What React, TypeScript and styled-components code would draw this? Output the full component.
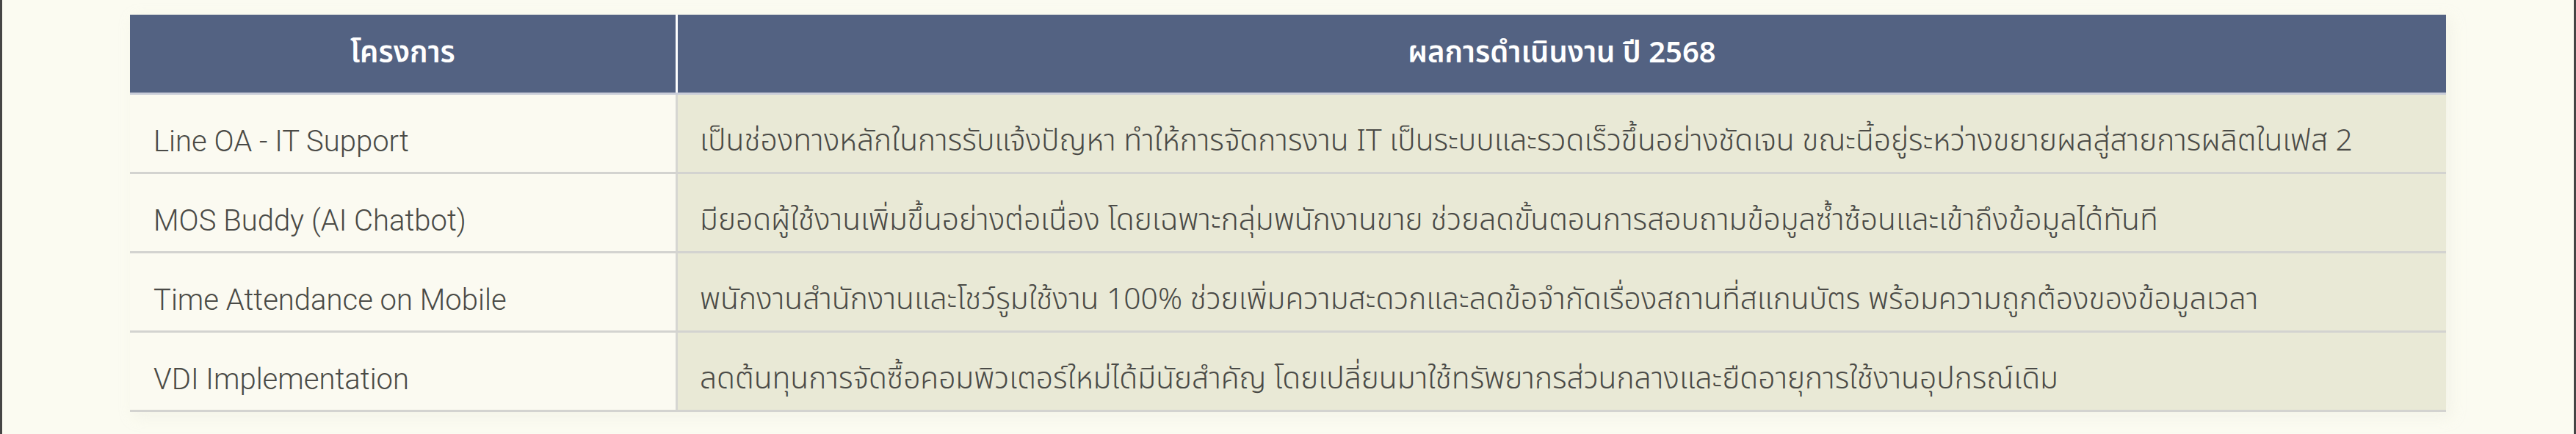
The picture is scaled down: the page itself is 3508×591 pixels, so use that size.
import React from "react";
import styled, { createGlobalStyle } from "styled-components";

const GlobalStyle = createGlobalStyle`
  html, body { margin: 0; padding: 0; background: #fbfbf1; }
  body { font-family: "Noto Sans Thai", "Noto Sans", "Liberation Sans", sans-serif; }
`;

const Page = styled.div`
  box-sizing: border-box;
  width: 3508px;
  height: 591px;
  background: #fbfbf1;
  border-left: 3px solid #454545;
  border-right: 3px solid #454545;
  padding: 20px 0 0 174px;
`;

const Table = styled.div`
  width: 3154px;
  display: grid;
  grid-template-columns: 743px 3px 1fr;
  box-shadow: 6px 6px 18px rgba(230, 230, 215, 0.35);
`;

const HeadCell = styled.div`
  height: 106px;
  background: #536282;
  border-bottom: 3px solid #c9cdd9;
  display: flex;
  align-items: center;
  justify-content: center;
  color: #ffffff;
  font-family: "Noto Sans Thai", "Noto Sans", "Liberation Sans", sans-serif;
  font-weight: 600;
  font-size: 40px;
`;

const HeadDivider = styled.div`
  background: #ffffff;
  border-bottom: 3px solid #c9cdd9;
`;

const Cell = styled.div<{ $tone: "light" | "dark" }>`
  box-sizing: content-box;
  height: 83px;
  padding-top: 22px;
  border-bottom: 3px solid #d3d3d0;
  background: ${(p) => (p.$tone === "light" ? "#fbfaf1" : "#e9e9d6")};
  display: flex;
  align-items: center;
  padding-left: ${(p) => (p.$tone === "light" ? "32px" : "30px")};
  color: #4a4a46;
  font-family: ${(p) =>
    p.$tone === "light"
      ? `"Roboto", "Liberation Sans", sans-serif`
      : `"Noto Sans Thai", "Noto Sans", "Liberation Sans", sans-serif`};
  font-weight: 300;
  font-size: ${(p) => (p.$tone === "light" ? "40px" : "40.8px")};
  white-space: nowrap;
`;

const BodyDivider = styled.div`
  background: #d6d6d2;
  border-bottom: 3px solid #d3d3d0;
`;

const rows: [string, string][] = [
  [
    "Line OA - IT Support",
    "เป็นช่องทางหลักในการรับแจ้งปัญหา ทำให้การจัดการงาน IT เป็นระบบและรวดเร็วขึ้นอย่างชัดเจน ขณะนี้อยู่ระหว่างขยายผลสู่สายการผลิตในเฟส 2",
  ],
  [
    "MOS Buddy (AI Chatbot)",
    "มียอดผู้ใช้งานเพิ่มขึ้นอย่างต่อเนื่อง โดยเฉพาะกลุ่มพนักงานขาย ช่วยลดขั้นตอนการสอบถามข้อมูลซ้ำซ้อนและเข้าถึงข้อมูลได้ทันที",
  ],
  [
    "Time Attendance on Mobile",
    "พนักงานสำนักงานและโชว์รูมใช้งาน 100% ช่วยเพิ่มความสะดวกและลดข้อจำกัดเรื่องสถานที่สแกนบัตร พร้อมความถูกต้องของข้อมูลเวลา",
  ],
  [
    "VDI Implementation",
    "ลดต้นทุนการจัดซื้อคอมพิวเตอร์ใหม่ได้มีนัยสำคัญ โดยเปลี่ยนมาใช้ทรัพยากรส่วนกลางและยืดอายุการใช้งานอุปกรณ์เดิม",
  ],
];

export default function App() {
  return (
    <>
      <GlobalStyle />
      <Page>
        <Table>
          <HeadCell>โครงการ</HeadCell>
          <HeadDivider />
          <HeadCell>ผลการดำเนินงาน ปี 2568</HeadCell>
          {rows.map(([name, result]) => (
            <React.Fragment key={name}>
              <Cell $tone="light">{name}</Cell>
              <BodyDivider />
              <Cell $tone="dark">{result}</Cell>
            </React.Fragment>
          ))}
        </Table>
      </Page>
    </>
  );
}
